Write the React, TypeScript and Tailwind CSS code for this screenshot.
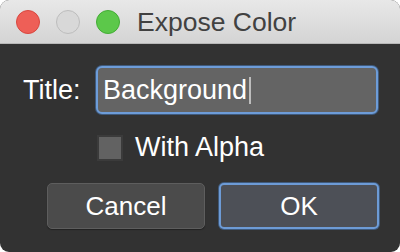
import React from "react";

export default function App() {
  const font = { fontFamily: '"Liberation Sans", Arial, sans-serif' };
  return (
    <div className="w-[400px] h-[252px] bg-white" style={font}>
      <div className="w-[400px] h-[252px] rounded-[9px] overflow-hidden bg-[#323232] flex flex-col">
        <div className="h-[44px] shrink-0 bg-gradient-to-b from-[#e8e8e8] to-[#d4d4d4] border-b border-[#b8b8b8] flex items-center pl-[16px]">
          <div className="w-[24px] h-[24px] rounded-full bg-[#ee5f57] border border-[#d9473f]" />
          <div className="w-[24px] h-[24px] rounded-full bg-[#d8d8d8] border border-[#bdbdbd] ml-[16px]" />
          <div className="w-[24px] h-[24px] rounded-full bg-[#5cc84a] border border-[#43ad35] ml-[16px]" />
          <div className="ml-[17px] text-[26.5px] leading-none text-[#414141] mt-[1px]">Expose Color</div>
        </div>
        <div className="flex flex-col pt-[22px]">
          <div className="flex items-center">
            <div className="w-[96px] pl-[23px] text-[27px] text-white leading-none">Title:</div>
            <div className="w-[282px] h-[48px] rounded-[6px] border-2 border-[#6d9cd8] bg-[#646464] flex items-center pl-[5px] shadow-[0_0_0_1px_#3f5a7c]">
              <span className="text-[27px] text-white leading-none">Background</span>
              <span className="w-[1.5px] h-[27px] bg-[#bdbdbd] ml-[2px]" />
            </div>
          </div>
          <div className="flex items-center mt-[20px] pl-[97px]">
            <div className="w-[26px] h-[26px] bg-[#626262] border-2 border-[#3b3b3b]" />
            <span className="ml-[12px] text-[27px] text-white leading-none">With Alpha</span>
          </div>
          <div className="flex mt-[22px] pl-[47px] gap-[14px]">
            <div className="w-[158px] h-[46px] rounded-[5px] bg-[#4b4b4b] border border-[#5e5e5e] shadow-[0_1px_1px_#222] flex items-center justify-center text-[26px] text-white leading-none">
              Cancel
            </div>
            <div className="w-[160px] h-[46px] rounded-[5px] bg-[#4d5057] border-2 border-[#6d9bd6] shadow-[0_0_0_1px_#3f5a7c] flex items-center justify-center text-[26px] text-white leading-none">
              OK
            </div>
          </div>
        </div>
      </div>
    </div>
  );
}
